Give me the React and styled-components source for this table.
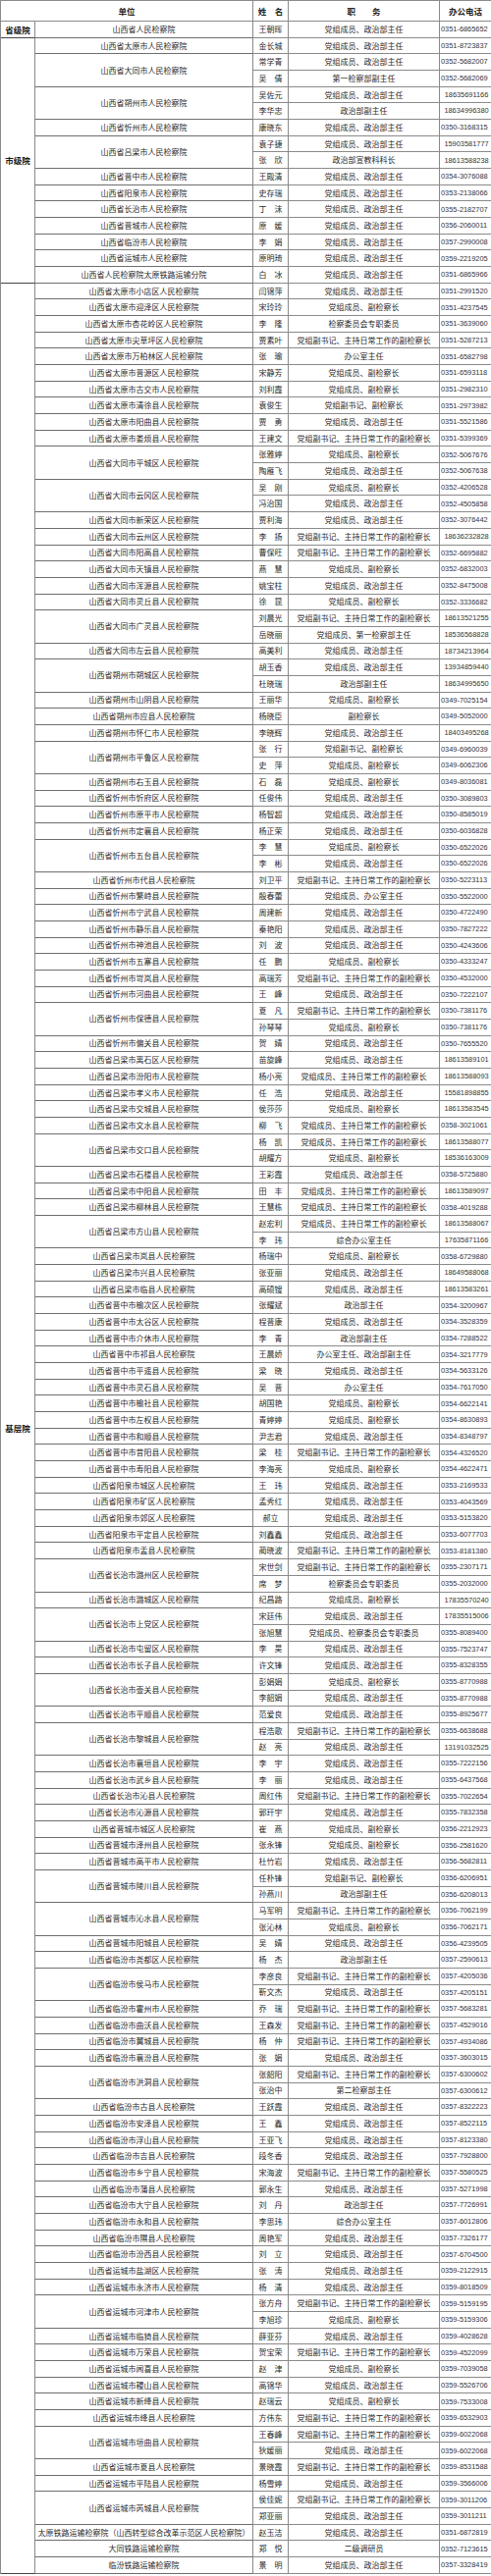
import React from 'react';
import styled, { createGlobalStyle } from 'styled-components';

const Global = createGlobalStyle`
  html, body { margin: 0; padding: 0; background: #fff; overflow-x: hidden; }
  body { font-family: "Noto Sans CJK SC", "Noto Sans", sans-serif; }
`;

const LINE = '#8a8a8a';

const Sheet = styled.div`
  display: grid;
  grid-template-columns: 35px 222px 36px 154px 53px;
  grid-template-rows: 21px;
  grid-auto-rows: 16.68px;
  width: 501px;
  border-top: 1px solid ${LINE};
  border-left: 1px solid ${LINE};
  color: #2a2a2a;
  font-size: 8px;
  background: #fff;
`;

const Cell = styled.div`
  box-sizing: border-box;
  display: flex;
  align-items: center;
  justify-content: center;
  white-space: nowrap;
  overflow: hidden;
  border-right: 1px solid ${LINE};
  border-bottom: 1px solid ${LINE};
  line-height: 1;
`;

const HeadCell = styled(Cell)`
  grid-column: ${(p) => p.$col};
  font-size: 8.5px;
  font-weight: 600;
  color: #222;
`;

const LevelCell = styled(Cell)`
  grid-column: 1;
  grid-row: span ${(p) => p.$span};
  font-size: 8.5px;
  font-weight: 700;
  color: #1a1a1a;
  border-bottom-color: #444;
`;

const UnitCell = styled(Cell)`
  grid-column: 2;
  grid-row: span ${(p) => p.$span};
  border-bottom-color: #6e6e6e;
`;

const NameCell = styled(Cell)`
  grid-column: 3;
`;

const DutyCell = styled(Cell)`
  grid-column: 4;
`;

const PhoneCell = styled(Cell)`
  grid-column: 5;
  border-right: none;
  font-family: "Liberation Sans", Arial, sans-serif;
  font-size: 7.4px;
  justify-content: ${(p) => (p.$mobile ? 'center' : 'flex-start')};
  padding-left: 1px;
  color: #333;
`;

const A = '党组成员、政治部主任';
const B = '党组成员、副检察长';
const C = '党组副书记、主持日常工作的副检察长';
const D = '党组成员、主持日常工作的副检察长';
const E = '党组副书记、副检察长';
const F = '政治部副主任';

const levels = [
  {
    name: '省级院',
    units: [['山西省人民检察院', [['王朝晖', A, '0351-6865652']]]],
  },
  {
    name: '市级院',
    units: [
      ['山西省太原市人民检察院', [['金长城', A, '0351-8723837']]],
      ['山西省大同市人民检察院', [['常学青', A, '0352-5682007'], ['吴　倩', '第一检察部副主任', '0352-5682069']]],
      ['山西省朔州市人民检察院', [['吴佐元', A, '18635691166'], ['李华忠', F, '18634996380']]],
      ['山西省忻州市人民检察院', [['康晓东', A, '0350-3168315']]],
      ['山西省吕梁市人民检察院', [['袁子捷', A, '15903581777'], ['张　欣', '政治部宣教科科长', '18613588238']]],
      ['山西省晋中市人民检察院', [['王殿清', A, '0354-3076088']]],
      ['山西省阳泉市人民检察院', [['史存瑞', A, '0353-2138066']]],
      ['山西省长治市人民检察院', [['丁　沫', A, '0355-2182707']]],
      ['山西省晋城市人民检察院', [['原　媛', A, '0356-2060011']]],
      ['山西省临汾市人民检察院', [['李　娟', A, '0357-2990008']]],
      ['山西省运城市人民检察院', [['原明琦', A, '0359-2219205']]],
      ['山西省人民检察院太原铁路运输分院', [['白　冰', A, '0351-6865966']]],
    ],
  },
  {
    name: '基层院',
    units: [
      ['山西省太原市小店区人民检察院', [['闫锦萍', A, '0351-2991520']]],
      ['山西省太原市迎泽区人民检察院', [['宋玲玲', B, '0351-4237545']]],
      ['山西省太原市杏花岭区人民检察院', [['李　隆', '检察委员会专职委员', '0351-3639060']]],
      ['山西省太原市尖草坪区人民检察院', [['贾素叶', C, '0351-5287213']]],
      ['山西省太原市万柏林区人民检察院', [['张　瑜', '办公室主任', '0351-6582798']]],
      ['山西省太原市晋源区人民检察院', [['宋静芳', B, '0351-6593118']]],
      ['山西省太原市古交市人民检察院', [['刘利霞', B, '0351-2982310']]],
      ['山西省太原市清徐县人民检察院', [['袁俊生', E, '0351-2973982']]],
      ['山西省太原市阳曲县人民检察院', [['贾　勇', A, '0351-5521586']]],
      ['山西省太原市娄烦县人民检察院', [['王建文', C, '0351-5399369']]],
      ['山西省大同市平城区人民检察院', [['张雅婷', B, '0352-5067676'], ['陶雁飞', A, '0352-5067638']]],
      ['山西省大同市云冈区人民检察院', [['吴　刚', B, '0352-4206528'], ['冯治国', A, '0352-4505858']]],
      ['山西省大同市新荣区人民检察院', [['贾利海', A, '0352-3076442']]],
      ['山西省大同市云州区人民检察院', [['李　扬', C, '18636232828']]],
      ['山西省大同市阳高县人民检察院', [['曹保旺', C, '0352-6695882']]],
      ['山西省大同市天镇县人民检察院', [['燕　慧', B, '0352-6832003']]],
      ['山西省大同市浑源县人民检察院', [['姚宝柱', A, '0352-8475008']]],
      ['山西省大同市灵丘县人民检察院', [['徐　昆', B, '0352-3336682']]],
      ['山西省大同市广灵县人民检察院', [['刘晨光', C, '18613521255'], ['岳晓丽', '党组成员、第一检察部主任', '18536568828']]],
      ['山西省大同市左云县人民检察院', [['高美利', A, '18734213964']]],
      ['山西省朔州市朔城区人民检察院', [['胡玉香', A, '13934859440'], ['杜晓瑞', F, '18634995650']]],
      ['山西省朔州市山阴县人民检察院', [['王丽华', B, '0349-7025154']]],
      ['山西省朔州市应县人民检察院', [['杨晓臣', '副检察长', '0349-5052000']]],
      ['山西省朔州市怀仁市人民检察院', [['李晓辉', A, '18403495268']]],
      ['山西省朔州市平鲁区人民检察院', [['张　行', E, '0349-6960039'], ['史　萍', B, '0349-6062306']]],
      ['山西省朔州市右玉县人民检察院', [['石　磊', B, '0349-8036081']]],
      ['山西省忻州市忻府区人民检察院', [['任俊伟', A, '0350-3089803']]],
      ['山西省忻州市原平市人民检察院', [['杨智超', A, '0350-8585019']]],
      ['山西省忻州市定襄县人民检察院', [['杨正荣', A, '0350-6036828']]],
      ['山西省忻州市五台县人民检察院', [['李　慧', B, '0350-6522026'], ['李　彬', A, '0350-6522026']]],
      ['山西省忻州市代县人民检察院', [['刘卫平', C, '0350-5223113']]],
      ['山西省忻州市繁峙县人民检察院', [['殷春蕾', '党组成员、办公室主任', '0350-5522000']]],
      ['山西省忻州市宁武县人民检察院', [['周建新', A, '0350-4722490']]],
      ['山西省忻州市静乐县人民检察院', [['秦艳阳', A, '0350-7827222']]],
      ['山西省忻州市神池县人民检察院', [['刘　波', A, '0350-4243606']]],
      ['山西省忻州市五寨县人民检察院', [['任　鹏', B, '0350-4333247']]],
      ['山西省忻州市岢岚县人民检察院', [['高瑞芳', C, '0350-4532000']]],
      ['山西省忻州市河曲县人民检察院', [['王　峰', A, '0350-7222107']]],
      ['山西省忻州市保德县人民检察院', [['夏　凡', C, '0350-7381176'], ['孙琴琴', B, '0350-7381176']]],
      ['山西省忻州市偏关县人民检察院', [['贺　婧', A, '0350-7655520']]],
      ['山西省吕梁市离石区人民检察院', [['苗旋峰', A, '18613589101']]],
      ['山西省吕梁市汾阳市人民检察院', [['杨小亮', D, '18613588093']]],
      ['山西省吕梁市孝义市人民检察院', [['任　浩', A, '15581898855']]],
      ['山西省吕梁市交城县人民检察院', [['侯莎莎', B, '18613583545']]],
      ['山西省吕梁市文水县人民检察院', [['柳　飞', D, '0358-3021061']]],
      ['山西省吕梁市交口县人民检察院', [['杨　凯', D, '18613588077'], ['胡耀方', B, '18536163009']]],
      ['山西省吕梁市石楼县人民检察院', [['王彩霞', A, '0358-5725880']]],
      ['山西省吕梁市中阳县人民检察院', [['田　丰', D, '18613589097']]],
      ['山西省吕梁市柳林县人民检察院', [['王慧栋', D, '0358-4019288']]],
      ['山西省吕梁市方山县人民检察院', [['赵宏利', D, '18613588067'], ['李　玮', '综合办公室主任', '17635871166']]],
      ['山西省吕梁市岚县人民检察院', [['杨瑞中', B, '0358-6729880']]],
      ['山西省吕梁市兴县人民检察院', [['张亚丽', A, '18649588068']]],
      ['山西省吕梁市临县人民检察院', [['高硕锼', A, '18613583261']]],
      ['山西省晋中市榆次区人民检察院', [['张耀斌', '政治部主任', '0354-3200967']]],
      ['山西省晋中市太谷区人民检察院', [['程晋康', A, '0354-3528359']]],
      ['山西省晋中市介休市人民检察院', [['李　青', F, '0354-7288522']]],
      ['山西省晋中市祁县人民检察院', [['王晨娇', '办公室主任、政治部副主任', '0354-3217779']]],
      ['山西省晋中市平遥县人民检察院', [['梁　晓', A, '0354-5633126']]],
      ['山西省晋中市灵石县人民检察院', [['吴　晋', '办公室主任', '0354-7617050']]],
      ['山西省晋中市榆社县人民检察院', [['胡国艳', B, '0354-6622141']]],
      ['山西省晋中市左权县人民检察院', [['青婷婷', B, '0354-8630893']]],
      ['山西省晋中市和顺县人民检察院', [['尹志君', A, '0354-8348797']]],
      ['山西省晋中市昔阳县人民检察院', [['梁　桂', C, '0354-4326520']]],
      ['山西省晋中市寿阳县人民检察院', [['李海亮', B, '0354-4622471']]],
      ['山西省阳泉市城区人民检察院', [['王　玮', A, '0353-2169533']]],
      ['山西省阳泉市矿区人民检察院', [['孟秀红', A, '0353-4043569']]],
      ['山西省阳泉市郊区人民检察院', [['郝立', A, '0353-5153820']]],
      ['山西省阳泉市平定县人民检察院', [['刘鑫鑫', A, '0353-6077703']]],
      ['山西省阳泉市盂县人民检察院', [['蔺晓波', C, '0353-8181380']]],
      ['山西省长治市潞州区人民检察院', [['宋世剑', C, '0355-2307171'], ['席　梦', '检察委员会专职委员', '0355-2032000']]],
      ['山西省长治市潞城区人民检察院', [['纪昌路', B, '17835570240']]],
      ['山西省长治市上党区人民检察院', [['宋廷伟', A, '17835515006'], ['张旭慧', '党组成员、检察委员会专职委员', '0355-8089400']]],
      ['山西省长治市屯留区人民检察院', [['李　昊', A, '0355-7523747']]],
      ['山西省长治市长子县人民检察院', [['许文锋', A, '0355-8328355']]],
      ['山西省长治市壶关县人民检察院', [['彭娟娟', B, '0355-8770988'], ['李韶娟', A, '0355-8770988']]],
      ['山西省长治市平顺县人民检察院', [['范爱良', A, '0355-8925677']]],
      ['山西省长治市黎城县人民检察院', [['程浩歌', C, '0355-6638688'], ['赵　亮', A, '13191032525']]],
      ['山西省长治市襄垣县人民检察院', [['李　宇', A, '0355-7222156']]],
      ['山西省长治市武乡县人民检察院', [['李　丽', A, '0355-6437568']]],
      ['山西省长治市沁县人民检察院', [['周红伟', C, '0355-7022654']]],
      ['山西省长治市沁源县人民检察院', [['郭玕宇', A, '0355-7832358']]],
      ['山西省晋城市城区人民检察院', [['崔　燕', B, '0356-2212923']]],
      ['山西省晋城市泽州县人民检察院', [['张永锋', B, '0356-2581620']]],
      ['山西省晋城市高平市人民检察院', [['杜竹岩', A, '0356-5682811']]],
      ['山西省晋城市陵川县人民检察院', [['任朴锋', E, '0356-6206951'], ['孙燕川', F, '0356-6208013']]],
      ['山西省晋城市沁水县人民检察院', [['马军明', C, '0356-7062199'], ['张沁林', B, '0356-7062171']]],
      ['山西省晋城市阳城县人民检察院', [['吴　婧', A, '0356-4239505']]],
      ['山西省临汾市尧都区人民检察院', [['杨　杰', F, '0357-2590613']]],
      ['山西省临汾市侯马市人民检察院', [['李彦良', C, '0357-4205036'], ['靳文杰', A, '0357-4205151']]],
      ['山西省临汾市霍州市人民检察院', [['乔　瑞', C, '0357-5683281']]],
      ['山西省临汾市曲沃县人民检察院', [['王森发', C, '0357-4529016']]],
      ['山西省临汾市翼城县人民检察院', [['杨　仲', C, '0357-4934086']]],
      ['山西省临汾市襄汾县人民检察院', [['张　娟', A, '0357-3603015']]],
      ['山西省临汾市洪洞县人民检察院', [['张韶阳', C, '0357-6300602'], ['张治中', '第二检察部主任', '0357-6300612']]],
      ['山西省临汾市古县人民检察院', [['王跃霞', A, '0357-8322223']]],
      ['山西省临汾市安泽县人民检察院', [['王　鑫', A, '0357-8522115']]],
      ['山西省临汾市浮山县人民检察院', [['王亚飞', A, '0357-8123380']]],
      ['山西省临汾市吉县人民检察院', [['段冬香', A, '0357-7928800']]],
      ['山西省临汾市乡宁县人民检察院', [['宋海波', C, '0357-5580525']]],
      ['山西省临汾市蒲县人民检察院', [['郭永生', A, '0357-5271998']]],
      ['山西省临汾市大宁县人民检察院', [['刘　丹', '政治部主任', '0357-7726991']]],
      ['山西省临汾市永和县人民检察院', [['李思玮', '综合办公室主任', '0357-6012806']]],
      ['山西省临汾市隰县人民检察院', [['周艳军', A, '0357-7326177']]],
      ['山西省临汾市汾西县人民检察院', [['刘　立', A, '0357-6704500']]],
      ['山西省运城市盐湖区人民检察院', [['张　涛', A, '0359-2122915']]],
      ['山西省运城市永济市人民检察院', [['杨　清', A, '0359-8018509']]],
      ['山西省运城市河津市人民检察院', [['张方舟', C, '0359-5159195'], ['李旭珍', B, '0359-5159306']]],
      ['山西省运城市临猗县人民检察院', [['薛亚芬', A, '0359-4028628']]],
      ['山西省运城市万荣县人民检察院', [['贺宝荣', C, '0359-4522099']]],
      ['山西省运城市闻喜县人民检察院', [['赵　津', B, '0359-7039058']]],
      ['山西省运城市稷山县人民检察院', [['高锦华', A, '0359-5526706']]],
      ['山西省运城市新绛县人民检察院', [['赵瑞云', B, '0359-7533008']]],
      ['山西省运城市绛县人民检察院', [['方伟东', C, '0359-6532903']]],
      ['山西省运城市垣曲县人民检察院', [['王春峰', C, '0359-6022068'], ['狄媛丽', A, '0359-6022068']]],
      ['山西省运城市夏县人民检察院', [['景晓霞', C, '0359-8531588']]],
      ['山西省运城市平陆县人民检察院', [['杨雪婷', A, '0359-3566006']]],
      ['山西省运城市芮城县人民检察院', [['侯佳妮', C, '0359-3011206'], ['郑亚丽', A, '0359-3011211']]],
      ['太原铁路运输检察院（山西转型综合改革示范区人民检察院）', [['赵玉洁', A, '0351-6872819']]],
      ['大同铁路运输检察院', [['郑　悦', '二级调研员', '0352-7123615']]],
      ['临汾铁路运输检察院', [['景　明', A, '0357-3328419']]],
    ],
  },
];

export default function App() {
  const cells = [];
  levels.forEach((lv, li) => {
    const total = lv.units.reduce((s, u) => s + u[1].length, 0);
    lv.units.forEach(([unit, people], ui) => {
      people.forEach(([name, duty, tel], pi) => {
        const key = `${li}-${ui}-${pi}`;
        if (ui === 0 && pi === 0) {
          cells.push(
            <LevelCell key={`l${key}`} $span={total}>
              {lv.name}
            </LevelCell>
          );
        }
        if (pi === 0) {
          cells.push(
            <UnitCell key={`u${key}`} $span={people.length}>
              {unit}
            </UnitCell>
          );
        }
        cells.push(<NameCell key={`n${key}`}>{name}</NameCell>);
        cells.push(<DutyCell key={`d${key}`}>{duty}</DutyCell>);
        cells.push(
          <PhoneCell key={`t${key}`} $mobile={!tel.includes('-')}>
            {tel}
          </PhoneCell>
        );
      });
    });
  });

  return (
    <>
      <Global />
      <Sheet>
        <HeadCell $col="1 / span 2">单位</HeadCell>
        <HeadCell $col="3">姓　名</HeadCell>
        <HeadCell $col="4">职　　务</HeadCell>
        <HeadCell $col="5">办公电话</HeadCell>
        {cells}
      </Sheet>
    </>
  );
}
